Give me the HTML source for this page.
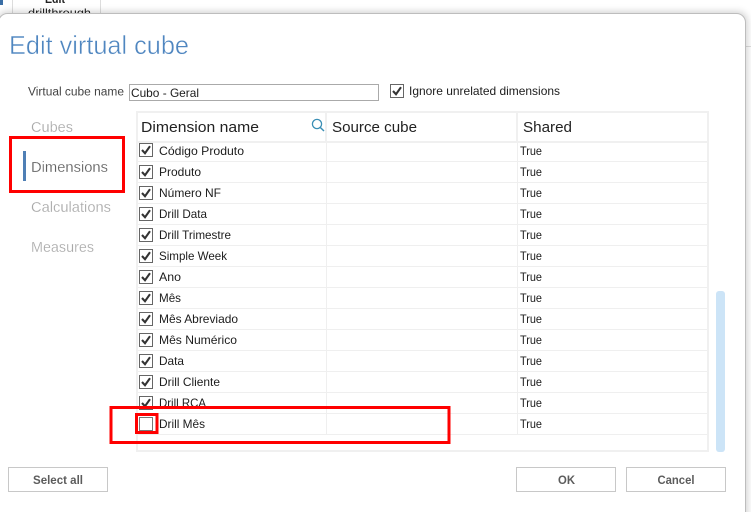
<!DOCTYPE html>
<html><head><meta charset="utf-8"><style>
html,body{margin:0;padding:0;background:#fff;width:751px;height:512px;overflow:hidden}
svg{display:block}
text{font-family:"Liberation Sans",sans-serif}
.r{font-size:12px;fill:#1c1c1c}
.h{font-size:15px;fill:#222}
.n{font-size:15px;fill:#a8a8a8;stroke:#fff;stroke-width:.2px}
.b{font-size:12px;font-weight:bold;fill:#5c5c5c;text-anchor:middle}
</style></head><body>
<svg width="751" height="512" viewBox="0 0 751 512" xmlns="http://www.w3.org/2000/svg">
<defs>
<filter id="s" x="-5%" y="-10%" width="110%" height="120%"><feGaussianBlur stdDeviation="4"/></filter>
<g id="c"><rect x="139.5" y="0.5" width="13" height="13" fill="#fff" stroke="#666"/><path d="M142 7l3 3.2 5-7" fill="none" stroke="#333" stroke-width="2.1"/></g>
</defs>
<rect width="751" height="512" fill="#fff"/>
<text x="45" y="3" font-size="12" fill="#222" font-weight="bold" textLength="20" lengthAdjust="spacingAndGlyphs">Edit</text>
<text x="28" y="17" font-size="12" fill="#222" textLength="63" lengthAdjust="spacingAndGlyphs">drillthrough</text>
<path d="M12.500 0V14M100.500 0V14" stroke="#ddd"/>
<path d="M0 0h3v5H0z" fill="#3a6ea5"/>
<path d="M746 46.500H751" stroke="#ddd"/>
<rect x="-2" y="12" width="749" height="520" rx="9" fill="#000" opacity=".2" filter="url(#s)"/>
<rect x="-1.500" y="13.500" width="747" height="520" rx="9" fill="#fff" stroke="#bdbdbd"/>

<text x="9" y="54" font-size="26" fill="#4f86c0" stroke="#fff" stroke-width=".45" textLength="180" lengthAdjust="spacingAndGlyphs">Edit virtual cube</text>

<text x="28" y="95.500" font-size="11.500" fill="#444" textLength="96" lengthAdjust="spacingAndGlyphs">Virtual cube name</text>
<rect x="129.500" y="84.500" width="249" height="16" fill="#fff" stroke="#aaa"/>
<text x="131" y="97" class="r" textLength="68" lengthAdjust="spacingAndGlyphs">Cubo - Geral</text>
<g transform="translate(251,84)"><use href="#c"/></g>
<text x="409" y="95" class="r" textLength="151" lengthAdjust="spacingAndGlyphs">Ignore unrelated dimensions</text>

<text x="31" y="132" class="n" textLength="42" lengthAdjust="spacingAndGlyphs">Cubes</text>
<rect x="23" y="151" width="3" height="30" fill="#4f7fb5"/>
<text x="31" y="172" class="n" style="fill:#5f5f5f" textLength="77" lengthAdjust="spacingAndGlyphs">Dimensions</text>
<text x="31" y="212" class="n" textLength="80" lengthAdjust="spacingAndGlyphs">Calculations</text>
<text x="31" y="252" class="n" textLength="63" lengthAdjust="spacingAndGlyphs">Measures</text>

<rect x="137" y="112" width="571" height="339" fill="#fff" stroke="#f0f0f0" stroke-width="2"/>
<path d="M138 142H708" stroke="#f0f0f0" stroke-width="2"/>
<path d="M326 113V141M517 113V141" stroke="#f0f0f0" stroke-width="2"/>
<path d="M138 161.500H707M138 182.500H707M138 203.500H707M138 224.500H707M138 245.500H707M138 266.500H707M138 287.500H707M138 308.500H707M138 329.500H707M138 350.500H707M138 371.500H707M138 392.500H707M138 413.500H707M138 434.500H707" stroke="#efefef"/>
<path d="M326.500 143V434M517.500 143V434" stroke="#efefef"/>

<text x="141" y="132" class="h" textLength="118" lengthAdjust="spacingAndGlyphs">Dimension name</text>
<circle cx="317" cy="124" r="4.600" fill="none" stroke="#3b8fb5" stroke-width="1.300"/>
<path d="M320.300 127.500L324 131" stroke="#3b8fb5" stroke-width="1.500"/>
<text x="332" y="132" class="h" textLength="85" lengthAdjust="spacingAndGlyphs">Source cube</text>
<text x="523" y="132" class="h" textLength="49" lengthAdjust="spacingAndGlyphs">Shared</text>

<g transform="translate(0,143)"><use href="#c"/></g>
<g transform="translate(0,165)"><use href="#c"/></g>
<g transform="translate(0,186)"><use href="#c"/></g>
<g transform="translate(0,207)"><use href="#c"/></g>
<g transform="translate(0,228)"><use href="#c"/></g>
<g transform="translate(0,249)"><use href="#c"/></g>
<g transform="translate(0,270)"><use href="#c"/></g>
<g transform="translate(0,291)"><use href="#c"/></g>
<g transform="translate(0,312)"><use href="#c"/></g>
<g transform="translate(0,333)"><use href="#c"/></g>
<g transform="translate(0,354)"><use href="#c"/></g>
<g transform="translate(0,375)"><use href="#c"/></g>
<g transform="translate(0,396)"><use href="#c"/></g>
<rect x="139.500" y="417.500" width="13" height="13" fill="#fff" stroke="#777"/>

<text x="159" y="155" class="r" textLength="85" lengthAdjust="spacingAndGlyphs">Código Produto</text>
<text x="159" y="176" class="r" textLength="42" lengthAdjust="spacingAndGlyphs">Produto</text>
<text x="159" y="197" class="r" textLength="62" lengthAdjust="spacingAndGlyphs">Número NF</text>
<text x="159" y="218" class="r" textLength="48" lengthAdjust="spacingAndGlyphs">Drill Data</text>
<text x="159" y="239" class="r" textLength="72" lengthAdjust="spacingAndGlyphs">Drill Trimestre</text>
<text x="159" y="260" class="r" textLength="68" lengthAdjust="spacingAndGlyphs">Simple Week</text>
<text x="159" y="281" class="r" textLength="22" lengthAdjust="spacingAndGlyphs">Ano</text>
<text x="159" y="302" class="r" textLength="22" lengthAdjust="spacingAndGlyphs">Mês</text>
<text x="159" y="323" class="r" textLength="79" lengthAdjust="spacingAndGlyphs">Mês Abreviado</text>
<text x="159" y="344" class="r" textLength="78" lengthAdjust="spacingAndGlyphs">Mês Numérico</text>
<text x="159" y="365" class="r" textLength="25" lengthAdjust="spacingAndGlyphs">Data</text>
<text x="159" y="386" class="r" textLength="61" lengthAdjust="spacingAndGlyphs">Drill Cliente</text>
<text x="159" y="407" class="r" textLength="47" lengthAdjust="spacingAndGlyphs">Drill RCA</text>
<text x="159" y="428" class="r" textLength="46" lengthAdjust="spacingAndGlyphs">Drill Mês</text>

<text x="520" y="155" class="r" textLength="22" lengthAdjust="spacingAndGlyphs">True</text>
<text x="520" y="176" class="r" textLength="22" lengthAdjust="spacingAndGlyphs">True</text>
<text x="520" y="197" class="r" textLength="22" lengthAdjust="spacingAndGlyphs">True</text>
<text x="520" y="218" class="r" textLength="22" lengthAdjust="spacingAndGlyphs">True</text>
<text x="520" y="239" class="r" textLength="22" lengthAdjust="spacingAndGlyphs">True</text>
<text x="520" y="260" class="r" textLength="22" lengthAdjust="spacingAndGlyphs">True</text>
<text x="520" y="281" class="r" textLength="22" lengthAdjust="spacingAndGlyphs">True</text>
<text x="520" y="302" class="r" textLength="22" lengthAdjust="spacingAndGlyphs">True</text>
<text x="520" y="323" class="r" textLength="22" lengthAdjust="spacingAndGlyphs">True</text>
<text x="520" y="344" class="r" textLength="22" lengthAdjust="spacingAndGlyphs">True</text>
<text x="520" y="365" class="r" textLength="22" lengthAdjust="spacingAndGlyphs">True</text>
<text x="520" y="386" class="r" textLength="22" lengthAdjust="spacingAndGlyphs">True</text>
<text x="520" y="407" class="r" textLength="22" lengthAdjust="spacingAndGlyphs">True</text>
<text x="520" y="428" class="r" textLength="22" lengthAdjust="spacingAndGlyphs">True</text>

<rect x="716" y="291" width="9" height="161" rx="3" fill="#cce4f7"/>

<rect x="8.500" y="467.500" width="99" height="24" fill="#fff" stroke="#c8c8c8"/>
<text x="58" y="484" class="b" textLength="50" lengthAdjust="spacingAndGlyphs">Select all</text>
<rect x="516.500" y="467.500" width="99" height="24" fill="#fff" stroke="#c8c8c8"/>
<text x="566.500" y="484" class="b" textLength="17" lengthAdjust="spacingAndGlyphs">OK</text>
<rect x="626.500" y="467.500" width="99" height="24" fill="#fff" stroke="#c8c8c8"/>
<text x="676" y="484" class="b" textLength="37" lengthAdjust="spacingAndGlyphs">Cancel</text>

<rect x="10.500" y="137.500" width="113" height="54" fill="none" stroke="#f00" stroke-width="3"/>
<rect x="111" y="407.500" width="338" height="35" fill="none" stroke="#f00" stroke-width="3"/>
<rect x="136.500" y="414.500" width="20.500" height="18" fill="none" stroke="#f00" stroke-width="3"/>
</svg>
</body></html>
